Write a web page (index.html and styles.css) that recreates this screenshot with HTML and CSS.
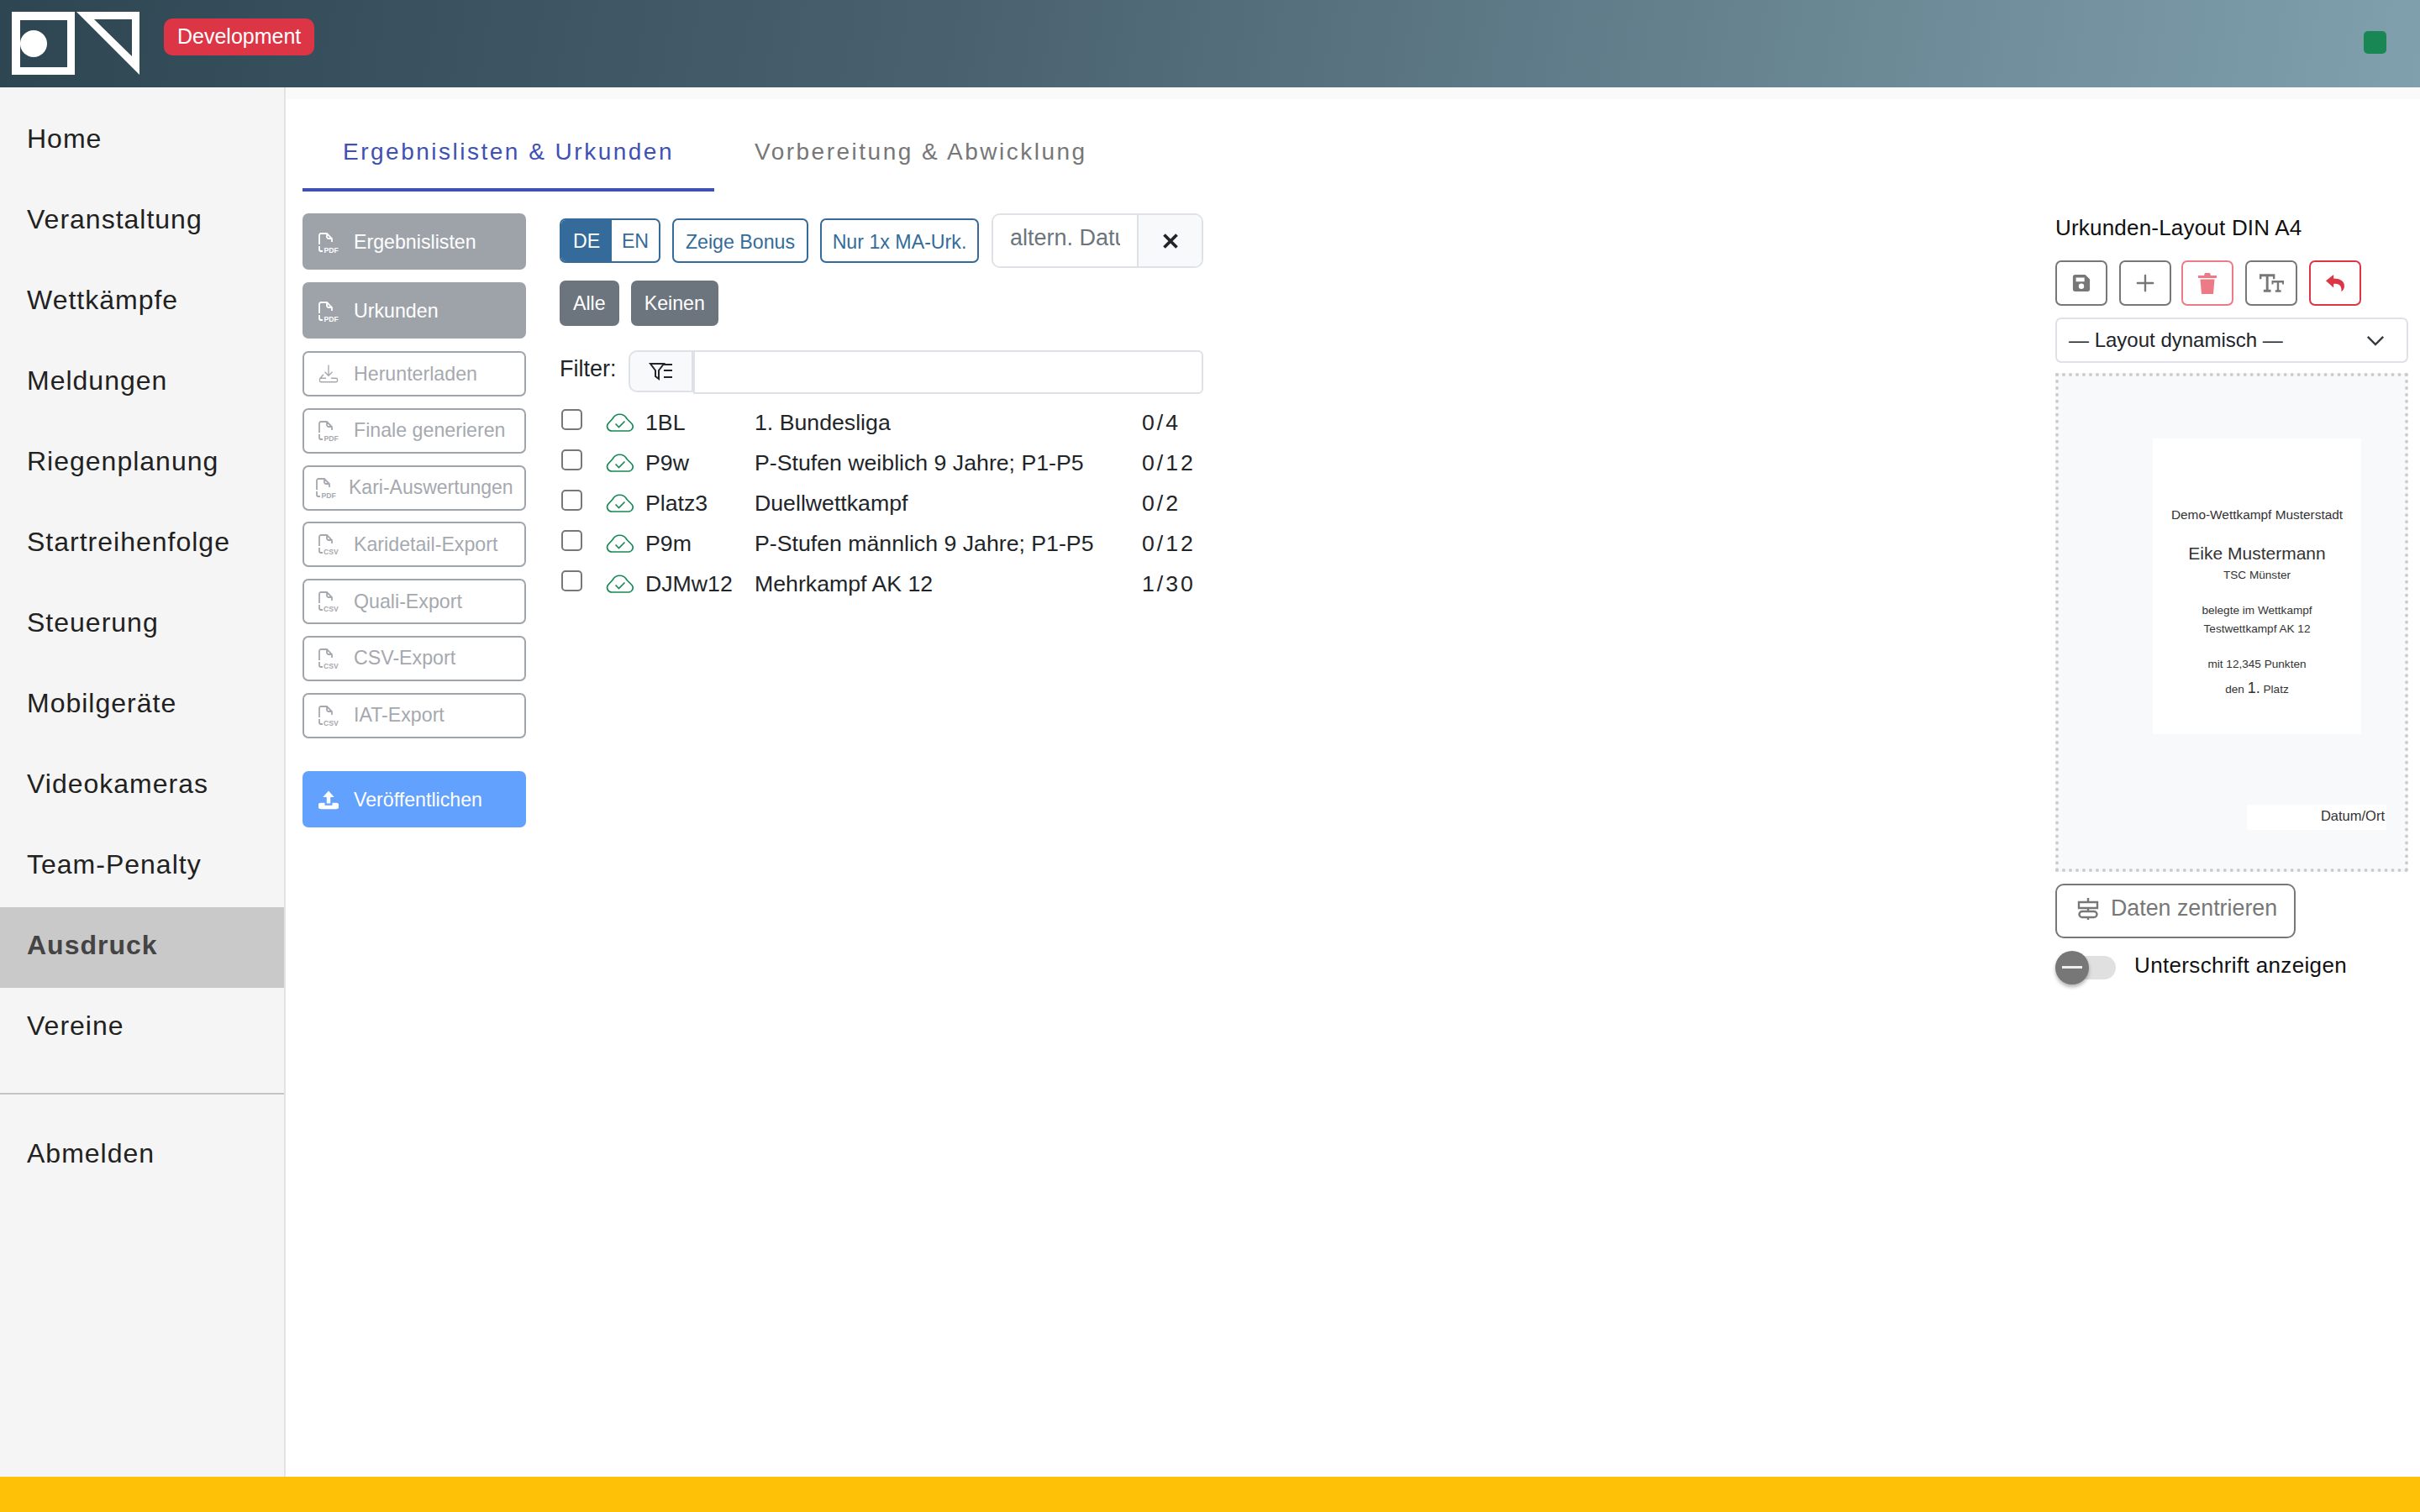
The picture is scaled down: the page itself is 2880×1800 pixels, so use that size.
FILE: index.html
```html
<!DOCTYPE html>
<html lang="de">
<head>
    <meta charset="UTF-8">
    <title>Ausdruck</title>
    <link rel="stylesheet" href="styles.css">
</head>
<body>
    <svg class="sprite" xmlns="http://www.w3.org/2000/svg">
        <symbol id="file-pdf" viewBox="0 0 24 24">
            <path d="M1 14V3A2 2 0 0 1 3 1H10L16 7V11M10 1V5A2 2 0 0 0 12 7H16M1 16V20A2 2 0 0 0 3 22H5" fill="none" stroke="currentColor" stroke-width="1.800"/>
            <text x="6.500" y="23.800" class="file-type">PDF</text>
        </symbol>
        <symbol id="file-csv" viewBox="0 0 24 24">
            <path d="M1 14V3A2 2 0 0 1 3 1H10L16 7V11M10 1V5A2 2 0 0 0 12 7H16M1 16V20A2 2 0 0 0 3 22H5" fill="none" stroke="currentColor" stroke-width="1.800"/>
            <text x="6" y="23.800" class="file-type">CSV</text>
        </symbol>
        <symbol id="cloud-check" viewBox="0 0 34 22">
            <path d="M7 21A5.500 5.500 0 0 1 2.500 12.500L8 6.500A9.500 9.500 0 0 1 25 6.500L31 12.500A5.300 5.300 0 0 1 28 21Z" fill="none" stroke="currentColor" stroke-width="1.700" stroke-linejoin="round"/>
            <path d="M11.500 12.500L15.500 16.500L22.500 9.500" fill="none" stroke="currentColor" stroke-width="1.600"/>
        </symbol>
    </svg>

    <header class="topbar">
        <svg class="logo" viewBox="0 0 152 75">
            <path fill="#fff" fill-rule="evenodd" d="M0 0H75V75H0ZM10 10V66H66V10Z"/>
            <circle cx="26" cy="38" r="16" fill="#fff"/>
            <path fill="#fff" fill-rule="evenodd" d="M77 0H152V75ZM98 9L143 53V9Z"/>
        </svg>
        <span class="badge-dev">Development</span>
        <span class="status-dot"></span>
    </header>

    <div class="layout">
        <nav class="sidebar">
            <a class="nav-item">Home</a>
            <a class="nav-item">Veranstaltung</a>
            <a class="nav-item">Wettkämpfe</a>
            <a class="nav-item">Meldungen</a>
            <a class="nav-item">Riegenplanung</a>
            <a class="nav-item">Startreihenfolge</a>
            <a class="nav-item">Steuerung</a>
            <a class="nav-item">Mobilgeräte</a>
            <a class="nav-item">Videokameras</a>
            <a class="nav-item">Team-Penalty</a>
            <a class="nav-item active">Ausdruck</a>
            <a class="nav-item">Vereine</a>
            <hr class="nav-divider">
            <a class="nav-item">Abmelden</a>
        </nav>

        <main class="content">
            <div class="tabs">
                <a class="tab active">Ergebnislisten &amp; Urkunden</a>
                <a class="tab">Vorbereitung &amp; Abwicklung</a>
            </div>

            <div class="panels">
                <div class="actions">
                    <button class="action solid"><svg class="action-icon"><use href="#file-pdf"/></svg>Ergebnislisten</button>
                    <button class="action solid"><svg class="action-icon"><use href="#file-pdf"/></svg>Urkunden</button>
                    <button class="action outline">
                        <svg class="action-icon" viewBox="0 0 32 32" fill="none" stroke="currentColor" stroke-width="1.800"><path d="M16 2V19M10 13L16 19L22 13M8 17L2 24V27A2 2 0 0 0 4 29H28A2 2 0 0 0 30 27V25A2 2 0 0 0 28 23H20M12 23H3"/></svg>Herunterladen
                    </button>
                    <button class="action outline"><svg class="action-icon"><use href="#file-pdf"/></svg>Finale generieren</button>
                    <button class="action outline tight"><svg class="action-icon"><use href="#file-pdf"/></svg>Kari-Auswertungen</button>
                    <button class="action outline"><svg class="action-icon"><use href="#file-csv"/></svg>Karidetail-Export</button>
                    <button class="action outline"><svg class="action-icon"><use href="#file-csv"/></svg>Quali-Export</button>
                    <button class="action outline"><svg class="action-icon"><use href="#file-csv"/></svg>CSV-Export</button>
                    <button class="action outline"><svg class="action-icon"><use href="#file-csv"/></svg>IAT-Export</button>
                    <button class="action publish">
                        <svg class="action-icon" viewBox="0 0 32 32" fill="currentColor"><path d="M16 2L25 12H19V22H13V12H7ZM4 21H10V25H22V21H28A4 4 0 0 1 28 31H4A4 4 0 0 1 4 21Z"/></svg>Veröffentlichen
                    </button>
                </div>

                <div class="lists">
                    <div class="toolbar">
                        <div class="lang-group">
                            <span class="lang active">DE</span>
                            <span class="lang">EN</span>
                        </div>
                        <button class="pill">Zeige Bonus</button>
                        <button class="pill">Nur 1x MA-Urk.</button>
                        <div class="date-group">
                            <input class="date-input" placeholder="altern. Datum" type="text">
                            <span class="date-clear">
                                <svg viewBox="0 0 16 16" fill="none" stroke="#212529" stroke-width="3"><path d="M2 2L14 14M14 2L2 14"/></svg>
                            </span>
                        </div>
                    </div>

                    <div class="select-row">
                        <button class="gray-btn">Alle</button>
                        <button class="gray-btn">Keinen</button>
                    </div>

                    <div class="filter-row">
                        <label class="filter-label">Filter:</label>
                        <span class="filter-btn">
                            <svg viewBox="0 0 30 22" fill="none" stroke="#212529" stroke-width="2"><path d="M2 2H18L12 10V20L8 17V10ZM18 3H28M18 10H28M18 18H28"/></svg>
                        </span>
                        <input class="filter-input" type="text">
                    </div>

                    <div class="comp-row">
                        <input class="check" type="checkbox">
                        <svg class="cloud"><use href="#cloud-check"/></svg>
                        <span>1BL</span><span>1. Bundesliga</span><span class="count">0/4</span>
                    </div>
                    <div class="comp-row">
                        <input class="check" type="checkbox">
                        <svg class="cloud"><use href="#cloud-check"/></svg>
                        <span>P9w</span><span>P-Stufen weiblich 9 Jahre; P1-P5</span><span class="count">0/12</span>
                    </div>
                    <div class="comp-row">
                        <input class="check" type="checkbox">
                        <svg class="cloud"><use href="#cloud-check"/></svg>
                        <span>Platz3</span><span>Duellwettkampf</span><span class="count">0/2</span>
                    </div>
                    <div class="comp-row">
                        <input class="check" type="checkbox">
                        <svg class="cloud"><use href="#cloud-check"/></svg>
                        <span>P9m</span><span>P-Stufen männlich 9 Jahre; P1-P5</span><span class="count">0/12</span>
                    </div>
                    <div class="comp-row">
                        <input class="check" type="checkbox">
                        <svg class="cloud"><use href="#cloud-check"/></svg>
                        <span>DJMw12</span><span>Mehrkampf AK 12</span><span class="count">1/30</span>
                    </div>
                </div>

                <aside class="designer">
                    <div class="designer-title">Urkunden-Layout DIN A4</div>
                    <div class="icon-row">
                        <button class="icon-btn">
                            <svg viewBox="0 0 24 24" fill="currentColor"><path fill-rule="evenodd" d="M4 1H17L23 7V20A3 3 0 0 1 20 23H4A3 3 0 0 1 1 20V4A3 3 0 0 1 4 1ZM5 5V10H16V5ZM12 12.500A3.500 3.500 0 1 0 12 19.500A3.500 3.500 0 1 0 12 12.500Z"/></svg>
                        </button>
                        <button class="icon-btn">
                            <svg viewBox="0 0 24 24" fill="none" stroke="currentColor" stroke-width="2.600" stroke-linecap="round"><path d="M12 2V22M2 12H22"/></svg>
                        </button>
                        <button class="icon-btn faded">
                            <svg class="tall" viewBox="0 0 22 25" fill="currentColor"><path d="M0 3H7L8 0H14L15 3H22V6H0ZM2.500 7.500H19.500L18 25H4Z"/></svg>
                        </button>
                        <button class="icon-btn">
                            <svg class="wide" viewBox="0 0 30 22" fill="currentColor"><path d="M0 0H19V6H16.500V3H11V19H14V22H5V19H8V3H2.500V6H0ZM15 8H30V12.500H28V10.500H24V19.500H26.500V22H19.500V19.500H21.500V10.500H17V12.500H15Z"/></svg>
                        </button>
                        <button class="icon-btn danger">
                            <svg viewBox="0 0 24 22" fill="currentColor"><path d="M0 8L10 0V5C18 5 24 8 24 15C24 18 22 21 20 22C21 16 18 11 10 12V17Z"/></svg>
                        </button>
                    </div>

                    <div class="layout-select">
                        <span>— Layout dynamisch —</span>
                        <svg viewBox="0 0 24 14" fill="none" stroke="#343a40" stroke-width="2.600"><path d="M2 2L12 12L22 2"/></svg>
                    </div>

                    <div class="preview">
                        <div class="preview-card">
                            <div class="pv-event">Demo-Wettkampf Musterstadt</div>
                            <div class="pv-name">Eike Mustermann</div>
                            <div class="pv-line">TSC Münster</div>
                            <div class="pv-line pv-gap">belegte im Wettkampf</div>
                            <div class="pv-line">Testwettkampf AK 12</div>
                            <div class="pv-line pv-gap">mit 12,345 Punkten</div>
                            <div class="pv-line pv-place">den <span class="pv-rank">1.</span> Platz</div>
                        </div>
                        <div class="preview-date">Datum/Ort</div>
                    </div>

                    <button class="center-btn">
                        <svg viewBox="0 0 26 28" fill="none" stroke="currentColor" stroke-width="2.400"><path d="M13 1V6M13 13V16M13 24V27M2 6H24V13H2ZM6 17H20A3.500 3.500 0 0 1 20 24H6A3.500 3.500 0 0 1 6 17Z"/></svg>
                        Daten zentrieren
                    </button>

                    <div class="signature">
                        <span class="toggle"><span class="toggle-thumb"></span></span>
                        <span class="signature-label">Unterschrift anzeigen</span>
                    </div>
                </aside>
            </div>
        </main>
    </div>

    <footer class="footer-bar"></footer>
</body>
</html>
```

FILE: styles.css
```css
* {
    box-sizing: border-box;
}
html, body {
    height: 100%;
}
body {
    margin: 0;
    display: flex;
    flex-direction: column;
    font-family: "Liberation Sans", Arial, sans-serif;
    color: #212529;
    background: #fff;
    overflow: hidden;
}
button {
    font-family: inherit;
    cursor: pointer;
}
.sprite {
    display: none;
}
.file-type {
    font-family: "Liberation Sans", Arial, sans-serif;
    font-size: 8.600px;
    font-weight: bold;
    fill: currentColor;
}

/* top bar */
.topbar {
    height: 104px;
    flex: none;
    display: flex;
    align-items: flex-start;
    background: linear-gradient(100deg, #2e4552 0%, #4a6270 40%, #80a0ad 100%);
}
.logo {
    width: 152px;
    height: 75px;
    margin: 14px 0 0 14px;
}
.badge-dev {
    margin: 22px 0 0 29px;
    height: 44px;
    padding: 0 16px;
    line-height: 43px;
    font-size: 25px;
    color: #fff;
    background: #dc3545;
    border-radius: 10px;
}
.status-dot {
    width: 27px;
    height: 27px;
    margin: 37px 40px 0 auto;
    background: #198754;
    border-radius: 5px;
}

.layout {
    flex: 1;
    display: flex;
    min-height: 0;
}

/* sidebar */
.sidebar {
    width: 340px;
    flex: none;
    padding-top: 16px;
    background: #f5f5f5;
    border-right: 2px solid #e3e3e3;
}
.nav-item {
    display: flex;
    align-items: center;
    height: 96px;
    padding: 0 0 5px 32px;
    font-size: 32px;
    letter-spacing: 1px;
    color: #212121;
}
.nav-item.active {
    font-weight: bold;
    color: #444;
    background: #c9c9c9;
}
.nav-divider {
    margin: 29px 0 25px;
    border: 0;
    border-top: 2px solid #c4c4c4;
}

/* main */
.content {
    flex: 1;
    min-width: 0;
    padding: 14px 14px 0 20px;
    box-shadow: inset 0 14px 0 #fafafa;
}
.tabs {
    display: flex;
    height: 110px;
}
.tab {
    padding: 45px 48px 0;
    line-height: 36px;
    font-size: 28px;
    letter-spacing: 2.500px;
    color: #777;
}
.tab.active {
    color: #3f51b5;
    border-bottom: 4px solid #3f51b5;
}
.panels {
    display: flex;
    padding-top: 26px;
}

/* action buttons */
.actions {
    width: 266px;
    flex: none;
    display: flex;
    flex-direction: column;
}
.action {
    display: flex;
    align-items: center;
    width: 100%;
    padding: 0 0 0 19px;
    font-size: 23.200px;
    border-radius: 7px;
    text-align: left;
}
.action-icon {
    width: 24px;
    height: 24px;
    margin-right: 18px;
    flex: none;
}
.action.solid {
    height: 67px;
    margin-bottom: 15px;
    padding-top: 2px;
    color: #fff;
    background: #9ea3aa;
    border: 0;
}
.action.outline {
    height: 54px;
    margin-bottom: 13.800px;
    padding-left: 17px;
    color: #a5a9af;
    background: #fff;
    border: 2px solid #a0a4ab;
}
.action.tight {
    padding-left: 14px;
    font-size: 23px;
    white-space: nowrap;
}
.action.tight .action-icon {
    margin-right: 15px;
}
.action.publish {
    height: 67px;
    margin-top: 25px;
    padding-top: 2px;
    color: #fff;
    background: #63a1ff;
    border: 0;
}

/* lists column */
.lists {
    width: 766px;
    flex: none;
    margin-left: 40px;
}
.toolbar {
    display: flex;
    align-items: flex-start;
    height: 80px;
}
.lang-group {
    display: flex;
    width: 120px;
    height: 53px;
    margin-top: 6px;
    border: 2px solid #346b9a;
    border-radius: 7px;
    overflow: hidden;
    font-size: 23.200px;
}
.lang {
    display: flex;
    align-items: center;
    justify-content: center;
    flex: 1;
    padding-top: 2px;
    color: #346b9a;
}
.lang.active {
    flex: none;
    width: 60px;
    color: #fff;
    background: #346b9a;
}
.pill {
    height: 53px;
    margin: 6px 0 0 14px;
    padding: 4px 0 0;
    font-size: 23.200px;
    color: #346b9a;
    background: #fff;
    border: 2px solid #346b9a;
    border-radius: 7px;
}
.pill:nth-child(2) {
    width: 162px;
}
.pill:nth-child(3) {
    width: 189px;
}
.date-group {
    display: flex;
    width: 252px;
    height: 65px;
    margin-left: 15px;
    border: 2px solid #dee2e6;
    border-radius: 10px;
    overflow: hidden;
}
.date-input {
    width: 171px;
    padding: 0 20px 6px;
    border: 0;
    font-family: inherit;
    font-size: 27px;
    outline: 0;
}
.date-input::placeholder {
    color: #6c757d;
}
.date-clear {
    flex: 1;
    display: flex;
    align-items: center;
    justify-content: center;
    background: #f8f9fa;
    border-left: 2px solid #dee2e6;
}
.date-clear svg {
    width: 20px;
    height: 20px;
}
.select-row {
    display: flex;
    gap: 14px;
    height: 83px;
}
.gray-btn {
    height: 54px;
    padding: 0 16px;
    font-size: 23.200px;
    color: #fff;
    background: #6c757d;
    border: 0;
    border-radius: 7px;
}
.filter-row {
    display: flex;
    align-items: flex-start;
    height: 62px;
}
.filter-label {
    width: 82px;
    padding-top: 7px;
    font-size: 27px;
    color: #212529;
}
.filter-btn {
    width: 77px;
    height: 50px;
    display: flex;
    align-items: center;
    justify-content: center;
    background: #f8f9fa;
    border: 2px solid #dee2e6;
    border-radius: 10px 0 0 10px;
}
.filter-btn svg {
    width: 30px;
    height: 22px;
}
.filter-input {
    flex: 1;
    height: 52px;
    border: 2px solid #dee2e6;
    border-radius: 0 6px 6px 0;
    outline: 0;
}
.comp-row {
    display: grid;
    grid-template-columns: 54px 48px 130px 461px auto;
    align-items: center;
    height: 48px;
    font-size: 26.700px;
}
.count {
    letter-spacing: 3px;
}
.check {
    appearance: none;
    width: 25px;
    height: 25px;
    margin: -8px 0 0 2px;
    background: #fff;
    border: 2px solid #777;
    border-radius: 5px;
}
.cloud {
    width: 34px;
    height: 22px;
    margin-left: 1px;
    color: #198754;
}

/* certificate designer */
.designer {
    width: 420px;
    flex: none;
    margin-left: auto;
}
.designer-title {
    margin-top: 0;
    height: 56px;
    line-height: 35px;
    font-size: 26px;
    letter-spacing: 0.200px;
    color: #111;
}
.icon-row {
    display: flex;
    gap: 14px;
    margin-bottom: 14px;
}
.icon-btn {
    width: 62px;
    height: 54px;
    display: flex;
    align-items: center;
    justify-content: center;
    padding: 0;
    color: #777;
    background: #fff;
    border: 2px solid #777;
    border-radius: 7px;
}
.icon-btn svg {
    width: 22px;
    height: 22px;
}
.icon-btn svg.wide {
    width: 29px;
}
.icon-btn svg.tall {
    height: 25px;
}
.icon-btn.faded {
    color: #ec7b87;
    border-color: #ec7b87;
    margin-left: -2px;
}
.icon-btn.danger {
    color: #dc3545;
    border-color: #dc3545;
}
.layout-select {
    display: flex;
    align-items: center;
    justify-content: space-between;
    height: 54px;
    padding: 0 26px 0 14px;
    font-size: 24px;
    color: #212529;
    border: 2px solid #dee2e6;
    border-radius: 7px;
}
.layout-select svg {
    width: 22px;
    height: 13px;
}
.preview {
    position: relative;
    height: 594px;
    margin-top: 12px;
    background: #f8f9fa;
    border: 4px dotted #ccc;
}
.preview-card {
    position: absolute;
    left: 112px;
    top: 74px;
    width: 248px;
    height: 352px;
    padding-top: 82px;
    background: #fff;
    text-align: center;
    color: #333;
}
.pv-event {
    font-size: 15.400px;
    line-height: 18px;
}
.pv-name {
    margin: 25px 0 3px;
    font-size: 21px;
    line-height: 24px;
}
.pv-line {
    font-size: 13.600px;
    line-height: 22px;
}
.pv-gap {
    margin-top: 20px;
}
.pv-place {
    margin-top: 6px;
}
.pv-rank {
    font-size: 18px;
}
.preview-date {
    position: absolute;
    left: 224px;
    top: 510px;
    width: 166px;
    height: 30px;
    padding-right: 2px;
    background: #fff;
    text-align: right;
    line-height: 26px;
    font-size: 16.500px;
    color: #333;
}
.center-btn {
    display: flex;
    align-items: center;
    gap: 14px;
    width: 286px;
    height: 65px;
    margin-top: 14px;
    padding: 0 0 6px 24px;
    font-size: 26.800px;
    color: #777;
    background: #fff;
    border: 2px solid #777;
    border-radius: 10px;
}
.center-btn svg {
    width: 26px;
    height: 28px;
}
.signature {
    display: flex;
    align-items: center;
    gap: 22px;
    margin-top: 12px;
    font-size: 26px;
    letter-spacing: 0.350px;
    color: #111;
}
.signature-label {
    padding-bottom: 3px;
}
.toggle {
    position: relative;
    width: 72px;
    height: 28px;
    margin: 9px 0 7px;
    background: #e0e0e0;
    border-radius: 14px;
}
.toggle-thumb {
    position: absolute;
    left: 0;
    top: -6px;
    width: 40px;
    height: 40px;
    background: #777;
    border-radius: 50%;
    box-shadow: 0 3px 4px rgba(0,0,0,0.3);
}
.toggle-thumb::after {
    content: "";
    position: absolute;
    left: 8px;
    top: 18px;
    width: 24px;
    height: 3px;
    background: #eee;
}

.footer-bar {
    height: 42px;
    flex: none;
    background: #ffc107;
}
```
